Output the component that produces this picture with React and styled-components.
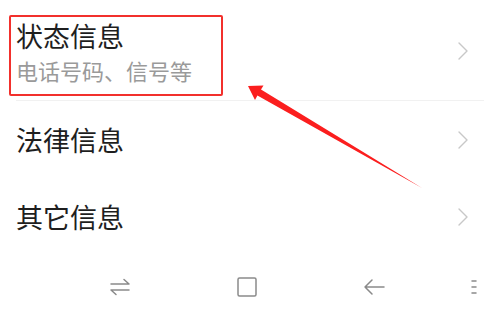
import React from 'react'
import styled, { createGlobalStyle } from 'styled-components'

const Global = createGlobalStyle`
	html, body {
		margin: 0;
		padding: 0;
		background: #ffffff;
	}
	body {
		font-family: "Noto Sans CJK SC", "Noto Sans", sans-serif;
	}
`

const Screen = styled.div`
	position: relative;
	width: 500px;
	height: 312px;
	overflow: hidden;
	background: #ffffff;
	display: flex;
	flex-direction: column;
`
const List = styled.div`
	flex: 1;
	display: flex;
	flex-direction: column;
`
const Row = styled.div`
	height: ${props => props.h}px;
	display: flex;
	align-items: center;
	justify-content: space-between;
	padding: 0 32px 0 16px;
	box-sizing: border-box;
	position: relative;
	${props => props.divider && `
		&::after {
			content: '';
			position: absolute;
			left: 16px;
			right: 16px;
			bottom: 0;
			height: 1px;
			background: #f1f1f1;
		}
	`}
`
const Highlight = styled.div`
	align-self: flex-start;
	margin: 15px 0 0 -7px;
	width: 214px;
	height: 81px;
	box-sizing: border-box;
	border: 2px solid #f2302c;
	border-radius: 2px;
	padding: 2px 5px 0;
`
const Title = styled.div`
	font-size: 27px;
	line-height: 34px;
	color: #1e1e1e;
`
const Subtitle = styled.div`
	font-size: 22px;
	line-height: 30px;
	margin-top: 2px;
	color: #9a9a9a;
`
const Chevron = styled.svg`
	width: 10px;
	height: 18px;
	flex-shrink: 0;
`
const NavBar = styled.div`
	height: 50px;
	display: flex;
	align-items: center;
	padding-left: 56px;
`
const NavSlot = styled.div`
	width: 127px;
	display: flex;
	justify-content: center;
	align-items: center;
`
const MenuSlot = styled.div`
	flex: 1;
	display: flex;
	justify-content: flex-end;
	padding-right: 22px;
`
const Pointer = styled.svg`
	position: absolute;
	left: 0;
	top: 0;
	width: 500px;
	height: 312px;
	pointer-events: none;
`

const Arrow = () => (
	<Chevron viewBox="0 0 10 18">
		<path d="M1 1 L9 9 L1 17" fill="none" stroke="#c8c8c8" strokeWidth="1.4" strokeLinecap="round" strokeLinejoin="round" />
	</Chevron>
)

const navStroke = { fill: 'none', stroke: '#8a8a8a', strokeWidth: 1.5, strokeLinecap: 'round', strokeLinejoin: 'round' }

export default function App() {
	return (
		<Screen>
			<Global />
			<List>
				<Row h={101} divider>
					<Highlight>
						<Title>状态信息</Title>
						<Subtitle>电话号码、信号等</Subtitle>
					</Highlight>
					<Arrow />
				</Row>
				<Row h={77}>
					<Title>法律信息</Title>
					<Arrow />
				</Row>
				<Row h={77}>
					<Title>其它信息</Title>
					<Arrow />
				</Row>
			</List>
			<NavBar>
				<NavSlot>
					<svg width="22" height="18" viewBox="0 0 22 18">
						<path d="M2 6 H20 L15 1.5" style={navStroke} />
						<path d="M20 12 H2 L7 16.5" style={navStroke} />
					</svg>
				</NavSlot>
				<NavSlot>
					<svg width="20" height="20" viewBox="0 0 20 20">
						<rect x="1" y="1" width="18" height="18" rx="1.5" style={navStroke} />
					</svg>
				</NavSlot>
				<NavSlot>
					<svg width="22" height="18" viewBox="0 0 22 18">
						<path d="M21 9 H2 M9 2 L2 9 L9 16" style={navStroke} />
					</svg>
				</NavSlot>
				<MenuSlot>
					<svg width="8" height="16" viewBox="0 0 8 16">
						<path d="M2 2 H6 M2 8 H6 M2 14 H6" style={navStroke} />
					</svg>
				</MenuSlot>
			</NavBar>
			<Pointer viewBox="0 0 500 312">
				<polygon
					points="248,86 263.5,85.5 261,89.6 422,188 257.4,95.6 255,100"
					fill="#fb1e1e"
				/>
			</Pointer>
		</Screen>
	)
}
